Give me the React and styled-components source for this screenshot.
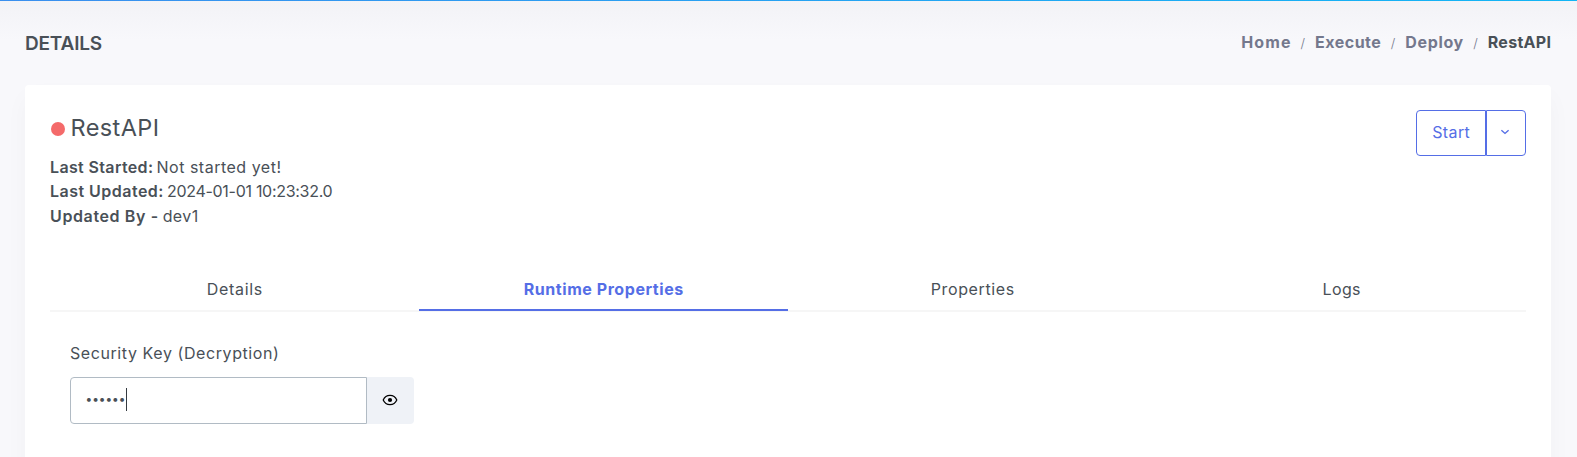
import React from 'react';
import styled, { createGlobalStyle } from 'styled-components';

const color = {
  text: '#495057',
  muted: '#74788d',
  primary: '#556ee6',
  danger: '#f46a6a',
  line: '#f6f6f6',
  addon: '#eff2f7',
  inputBorder: '#b1bbc4',
};

const GlobalStyle = createGlobalStyle`
  * { box-sizing: border-box; }
  html, body { height: 100%; }
  body {
    margin: 0;
    overflow: hidden;
    background: #f8f8fb;
    color: ${color.text};
    font-family: Inter, "Open Sans", sans-serif;
    font-size: 16px;
    line-height: 24px;
  }
`;

const Page = styled.div`
  height: 457px;
  display: flex;
  flex-direction: column;
  overflow: hidden;
  background: linear-gradient(to bottom, #f3f3f6 0, #f4f4f8 12px, #f8f8fb 40px);
`;

const TopLine = styled.div`
  flex: none;
  height: 1px;
  background: linear-gradient(to right, #3b8fee, #12b5f5);
`;

const Header = styled.header`
  flex: none;
  height: 84px;
  padding: 0 26px 0 25px;
  display: flex;
  justify-content: space-between;
  align-items: center;
`;

const Tracked = styled.span`
  white-space: nowrap;
  letter-spacing: ${p => p.$tracking || 0}px;
  margin-right: ${p => -(p.$tracking || 0)}px;
`;

const PageTitle = styled.h1`
  margin: 1px 0 0;
  font-size: 19px;
  line-height: 24px;
  font-weight: 600;
`;

const Breadcrumb = styled.nav`
  margin-bottom: 2px;
  display: flex;
  line-height: 24px;
  font-weight: 700;
  color: ${color.muted};
`;

const Crumb = styled.span`
  color: ${p => (p.$current ? color.text : 'inherit')};
`;

const Slash = styled.span`
  width: 24.5px;
  padding-top: 1px;
  text-align: center;
  font-size: 13px;
  font-weight: 300;
`;

const Card = styled.main`
  flex: none;
  height: 400px;
  margin: 0 26px 0 25px;
  padding: 25px 25px 0;
  border-radius: 4px;
  background: #fff;
  box-shadow: 0 12px 24px rgba(18, 38, 63, 0.03);
`;

const Summary = styled.section`
  height: 160px;
  display: flex;
  justify-content: space-between;
  align-items: flex-start;
`;

const Name = styled.h2`
  margin: 3px 0 12px;
  display: flex;
  align-items: center;
  gap: 6px;
  font-size: 23.5px;
  line-height: 30px;
  font-weight: 400;
`;

const StatusDot = styled.i`
  width: 14px;
  height: 14px;
  margin: 2px 0 0 0.5px;
  border-radius: 50%;
  background: ${color.danger};
`;

const Meta = styled.p`
  margin: 0;
  display: flex;
  gap: ${p => p.$gap}px;
  line-height: 24.4px;
`;

const Label = styled.strong`
  font-weight: 600;
`;

const ButtonGroup = styled.div`
  display: flex;
  height: 46px;
`;

const Button = styled.button`
  width: ${p => p.$width}px;
  padding: 0 ${p => (p.$end ? 2 : 0)}px 2px 0;
  display: flex;
  align-items: center;
  justify-content: center;
  border: 1px solid ${color.primary};
  border-radius: ${p => (p.$end ? '0 4px 4px 0' : '4px 0 0 4px')};
  background: transparent;
  color: ${color.primary};
  font: 400 16px/24px Inter, sans-serif;
`;

const Tabs = styled.nav`
  height: 42px;
  display: grid;
  grid-template-columns: repeat(4, 1fr);
  box-shadow: inset 0 -2px ${color.line};
`;

const Tab = styled.a`
  height: 41px;
  padding-top: 7px;
  text-align: center;
  border-bottom: 2px solid ${p => (p.$active ? color.primary : 'transparent')};
  color: ${p => (p.$active ? color.primary : 'inherit')};
  font-weight: ${p => (p.$active ? 700 : 400)};
`;

const Field = styled.div`
  padding: 29px 0 0 20px;
`;

const FieldLabel = styled.label`
  display: block;
  margin-bottom: 12px;
`;

const InputGroup = styled.div`
  display: flex;
  height: 47px;
`;

const PasswordBox = styled.div`
  width: 297px;
  padding: 0 0 2px 15px;
  display: flex;
  align-items: center;
  border: 1px solid ${color.inputBorder};
  border-radius: 4px 0 0 4px;
`;

const Mask = styled.span`
  padding-bottom: 1px;
  font: 700 12px/24px Inter, sans-serif;
  letter-spacing: 0.95px;
`;

const Caret = styled.span`
  width: 1px;
  height: 23px;
  background: #343a40;
`;

const Addon = styled.button`
  width: 47px;
  padding: 0 2px 2px 0;
  display: flex;
  align-items: center;
  justify-content: center;
  border: 0;
  border-radius: 0 4px 4px 0;
  background: ${color.addon};
`;

const crumbs = [
  ['Home', 1.1],
  ['Execute', 0.5],
  ['Deploy', 0.64],
  ['RestAPI', 0.3],
];

const tabs = [
  ['Details', 0.7],
  ['Runtime Properties', 0.56],
  ['Properties', 0.62],
  ['Logs', 0.4],
];

const meta = [
  ['Last Started:', 0.36, 'Not started yet!', 0.5, 3.5],
  ['Last Updated:', 0.48, '2024-01-01 10:23:32.0', -0.29, 3.5],
  ['Updated By -', 0.62, 'dev1', 0.4, 4.5],
];

function ChevronIcon() {
  return (
    <svg width="10" height="8" viewBox="0 0 10 8" fill="none" stroke="currentColor" strokeWidth="1.4">
      <path d="M1.4 2.2 5 5.4 8.6 2.2" />
    </svg>
  );
}

function EyeIcon() {
  return (
    <svg width="16" height="12" viewBox="0 0 16 12">
      <path d="M1.2 6C2.5 3 5 1.4 8 1.4S13.5 3 14.8 6C13.5 9 11 10.6 8 10.6S2.5 9 1.2 6Z" fill="none" stroke="#000" strokeWidth="1.2" />
      <circle cx="8" cy="6" r="2.1" />
    </svg>
  );
}

export default function App() {
  return (
    <Page>
      <GlobalStyle />
      <TopLine />
      <Header>
        <PageTitle><Tracked $tracking={-0.2}>DETAILS</Tracked></PageTitle>
        <Breadcrumb>
          {crumbs.map(([name, tracking], i) => (
            <React.Fragment key={name}>
              {i > 0 && <Slash>/</Slash>}
              <Crumb $current={i === crumbs.length - 1}>
                <Tracked $tracking={tracking}>{name}</Tracked>
              </Crumb>
            </React.Fragment>
          ))}
        </Breadcrumb>
      </Header>
      <Card>
        <Summary>
          <div>
            <Name><StatusDot /><Tracked $tracking={0.4}>RestAPI</Tracked></Name>
            {meta.map(([label, labelTracking, value, valueTracking, gap]) => (
              <Meta key={label} $gap={gap}>
                <Label><Tracked $tracking={labelTracking}>{label}</Tracked></Label>
                <Tracked $tracking={valueTracking}>{value}</Tracked>
              </Meta>
            ))}
          </div>
          <ButtonGroup>
            <Button $width={70}><Tracked $tracking={0.37}>Start</Tracked></Button>
            <Button $width={40} $end aria-label="More actions"><ChevronIcon /></Button>
          </ButtonGroup>
        </Summary>
        <Tabs>
          {tabs.map(([name, tracking]) => (
            <Tab key={name} $active={name === 'Runtime Properties'}>
              <Tracked $tracking={tracking}>{name}</Tracked>
            </Tab>
          ))}
        </Tabs>
        <Field>
          <FieldLabel><Tracked $tracking={0.58}>Security Key (Decryption)</Tracked></FieldLabel>
          <InputGroup>
            <PasswordBox><Mask>••••••</Mask><Caret /></PasswordBox>
            <Addon aria-label="Show key"><EyeIcon /></Addon>
          </InputGroup>
        </Field>
      </Card>
    </Page>
  );
}
